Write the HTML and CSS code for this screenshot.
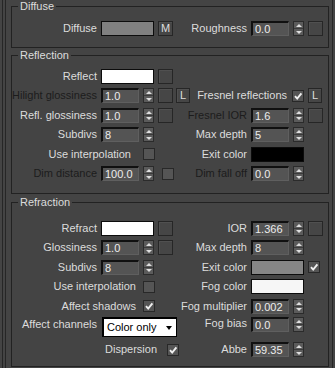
FILE: index.html
```html
<!DOCTYPE html>
<html lang="en">
  <head>
    <meta charset="UTF-8" />
    <title>VRayMtl - Basic parameters</title>
    <link rel="stylesheet" href="styles.css">
  </head>
  <body>
    <div class="rollout">
      <div class="rollout-body">

        <fieldset class="group diffuse">
          <legend>Diffuse</legend>
          <div class="row">
            <div class="half left">
              <span class="lbl">Diffuse</span>
              <span class="swatch gray"></span>
              <span class="btn txt">M</span>
            </div>
            <div class="half right">
              <span class="lbl">Roughness</span>
              <span class="num">0.0</span>
              <span class="spin"></span>
              <span class="btn"></span>
            </div>
          </div>
        </fieldset>

        <fieldset class="group reflection">
          <legend>Reflection</legend>
          <div class="row">
            <div class="half left">
              <span class="lbl">Reflect</span>
              <span class="swatch white"></span>
              <span class="btn"></span>
            </div>
            <div class="half right"></div>
          </div>
          <div class="row">
            <div class="half left">
              <span class="lbl off">Hilight glossiness</span>
              <span class="num">1.0</span>
              <span class="spin"></span>
              <span class="btn"></span>
              <span class="btn txt small">L</span>
            </div>
            <div class="half right">
              <span class="lbl fresnel">Fresnel reflections</span>
              <span class="cb on"><svg viewBox="0 0 10 10"><path d="M2 5.2 L4.2 7.6 L8.4 2.4" /></svg></span>
              <span class="btn txt small">L</span>
            </div>
          </div>
          <div class="row">
            <div class="half left">
              <span class="lbl">Refl. glossiness</span>
              <span class="num">1.0</span>
              <span class="spin"></span>
              <span class="btn"></span>
            </div>
            <div class="half right">
              <span class="lbl off">Fresnel IOR</span>
              <span class="num">1.6</span>
              <span class="spin"></span>
              <span class="btn"></span>
            </div>
          </div>
          <div class="row">
            <div class="half left">
              <span class="lbl">Subdivs</span>
              <span class="num">8</span>
              <span class="spin"></span>
            </div>
            <div class="half right">
              <span class="lbl">Max depth</span>
              <span class="num">5</span>
              <span class="spin"></span>
            </div>
          </div>
          <div class="row">
            <div class="half left">
              <span class="lbl interp">Use interpolation</span>
              <span class="cb"></span>
            </div>
            <div class="half right">
              <span class="lbl">Exit color</span>
              <span class="swatch black"></span>
            </div>
          </div>
          <div class="row">
            <div class="half left">
              <span class="lbl off">Dim distance</span>
              <span class="num">100.0</span>
              <span class="spin"></span>
              <span class="cb after-spin"></span>
            </div>
            <div class="half right">
              <span class="lbl off">Dim fall off</span>
              <span class="num">0.0</span>
              <span class="spin"></span>
            </div>
          </div>
        </fieldset>

        <fieldset class="group refraction">
          <legend>Refraction</legend>
          <div class="row">
            <div class="half left">
              <span class="lbl">Refract</span>
              <span class="swatch white"></span>
              <span class="btn"></span>
            </div>
            <div class="half right">
              <span class="lbl">IOR</span>
              <span class="num">1.366</span>
              <span class="spin"></span>
              <span class="btn"></span>
            </div>
          </div>
          <div class="row">
            <div class="half left">
              <span class="lbl">Glossiness</span>
              <span class="num">1.0</span>
              <span class="spin"></span>
              <span class="btn"></span>
            </div>
            <div class="half right">
              <span class="lbl">Max depth</span>
              <span class="num">8</span>
              <span class="spin"></span>
            </div>
          </div>
          <div class="row">
            <div class="half left">
              <span class="lbl">Subdivs</span>
              <span class="num">8</span>
              <span class="spin"></span>
            </div>
            <div class="half right">
              <span class="lbl">Exit color</span>
              <span class="swatch mid"></span>
              <span class="cb on"><svg viewBox="0 0 10 10"><path d="M2 5.2 L4.2 7.6 L8.4 2.4" /></svg></span>
            </div>
          </div>
          <div class="row">
            <div class="half left">
              <span class="lbl check">Use interpolation</span>
              <span class="cb"></span>
            </div>
            <div class="half right">
              <span class="lbl">Fog color</span>
              <span class="swatch fog"></span>
            </div>
          </div>
          <div class="row">
            <div class="half left">
              <span class="lbl check">Affect shadows</span>
              <span class="cb on"><svg viewBox="0 0 10 10"><path d="M2 5.2 L4.2 7.6 L8.4 2.4" /></svg></span>
            </div>
            <div class="half right">
              <span class="lbl">Fog multiplier</span>
              <span class="num">0.002</span>
              <span class="spin"></span>
            </div>
          </div>
          <div class="row tall">
            <div class="half left">
              <span class="lbl channels">Affect channels</span>
              <span class="select">Color only<i class="arrow"></i></span>
            </div>
            <div class="half right">
              <span class="lbl">Fog bias</span>
              <span class="num">0.0</span>
              <span class="spin"></span>
            </div>
          </div>
          <div class="row">
            <div class="half left">
              <span class="lbl disp">Dispersion</span>
              <span class="cb on"><svg viewBox="0 0 10 10"><path d="M2 5.2 L4.2 7.6 L8.4 2.4" /></svg></span>
            </div>
            <div class="half right">
              <span class="lbl">Abbe</span>
              <span class="num">59.35</span>
              <span class="spin"></span>
            </div>
          </div>
        </fieldset>

      </div>
    </div>
  </body>
</html>
```
FILE: styles.css
```css
body {
  margin: 0;
  width: 335px;
  height: 368px;
  overflow: hidden;
  background-color: #444444;
  color: #dcdcdc;
  font-family: "Liberation Sans", Arial, sans-serif;
  font-size: 11px;
  line-height: 13px;
}
.rollout {
  margin: 0 2px;
  height: 368px;
  border-left: 1px solid #262626;
  border-right: 1px solid #262626;
  padding: 0 2px;
}
.rollout-body {
  height: 368px;
  border-left: 1px solid #262626;
  padding: 0 1px 0 5px;
}

/* group boxes */
.group {
  margin: 0;
  padding: 0;
  min-width: 0;
  border: 1px solid #222222;
}
.group legend {
  margin-left: 6px;
  padding: 0 2px;
  line-height: 13px;
}
.diffuse {
  padding: 6px 0 8px;
}
.reflection {
  margin-top: 1px;
  padding: 5px 0 9px;
}
.refraction {
  margin-top: 2px;
  padding: 10px 0 6px;
}

/* rows */
.row {
  display: flex;
  align-items: center;
  height: 19.5px;
}
.row.tall {
  height: 24px;
  align-items: flex-start;
  padding-top: 1px;
  box-sizing: border-box;
}
.half {
  display: flex;
  align-items: center;
}
.half.left {
  width: 183px;
  flex: none;
}
.tall .half {
  align-items: flex-start;
}
.lbl {
  flex: none;
  display: flex;
  justify-content: flex-end;
  white-space: nowrap;
  width: 85px;
  margin-right: 4px;
}
.right .lbl {
  width: 52px;
}
.right .lbl.fresnel {
  width: 92px;
  margin-right: 5px;
}
.lbl.interp {
  width: 119px;
  margin-right: 12px;
}
.lbl.check {
  width: 124px;
  margin-right: 7px;
}
.lbl.disp {
  width: 145px;
  margin-right: 10px;
}
.lbl.channels {
  margin-right: 5px;
  padding-top: 1px;
}
.lbl.off {
  color: #1c1c1c;
}

/* controls */
.num {
  flex: none;
  box-sizing: border-box;
  width: 38px;
  height: 15px;
  margin-right: 4px;
  padding-left: 2px;
  border-top: 2px solid #101010;
  border-left: 2px solid #101010;
  border-right: 1px solid #5f5f5f;
  border-bottom: 1px solid #5f5f5f;
  background-color: #545454;
  color: #ececec;
  line-height: 12px;
}
.spin {
  flex: none;
  box-sizing: border-box;
  width: 11px;
  height: 15px;
  margin-right: 4px;
  border: 1px solid #2b2b2b;
  background: linear-gradient(#5b5b5b 0 6px, #3a3a3a 6px 7px, #5b5b5b 7px);
  display: flex;
  flex-direction: column;
  align-items: center;
  justify-content: space-around;
}
.spin::before,
.spin::after {
  content: "";
  border-left: 3px solid transparent;
  border-right: 3px solid transparent;
}
.spin::before {
  border-bottom: 3px solid #dedede;
}
.spin::after {
  border-top: 3px solid #dedede;
}
.btn {
  flex: none;
  box-sizing: border-box;
  width: 15px;
  height: 15px;
  margin-right: 3px;
  border: 1px solid #262626;
  background-color: #464646;
  box-shadow: inset 1px 1px 0 #505050;
}
.btn.txt {
  display: flex;
  align-items: center;
  justify-content: center;
  color: #dedede;
}
.btn.small {
  width: 14px;
}
.swatch {
  flex: none;
  box-sizing: border-box;
  width: 53px;
  height: 15px;
  margin-right: 4px;
  border: 1px solid #0c0c0c;
}
.swatch.gray {
  background-color: #808080;
}
.swatch.mid {
  background-color: #868686;
}
.swatch.white {
  background-color: #ffffff;
}
.swatch.fog {
  background-color: #f6f6f6;
}
.swatch.black {
  background-color: #000000;
}
.cb {
  flex: none;
  box-sizing: border-box;
  width: 12px;
  height: 12px;
  margin-right: 4px;
  border: 1px solid #282828;
  background-color: #555555;
}
.cb.after-spin {
  margin-left: 4px;
}
.cb svg {
  display: block;
  width: 10px;
  height: 10px;
}
.cb svg path {
  fill: none;
  stroke: #f0f0f0;
  stroke-width: 1.9;
}
.select {
  flex: none;
  box-sizing: border-box;
  width: 75px;
  height: 20px;
  padding: 0 4px 0 3px;
  border-style: solid;
  border-color: #000000;
  border-width: 2px 1px 1px 2px;
  background-color: #ffffff;
  color: #000000;
  display: flex;
  align-items: center;
  justify-content: space-between;
}
.arrow {
  border-left: 3.5px solid transparent;
  border-right: 3.5px solid transparent;
  border-top: 4px solid #000000;
}
```
